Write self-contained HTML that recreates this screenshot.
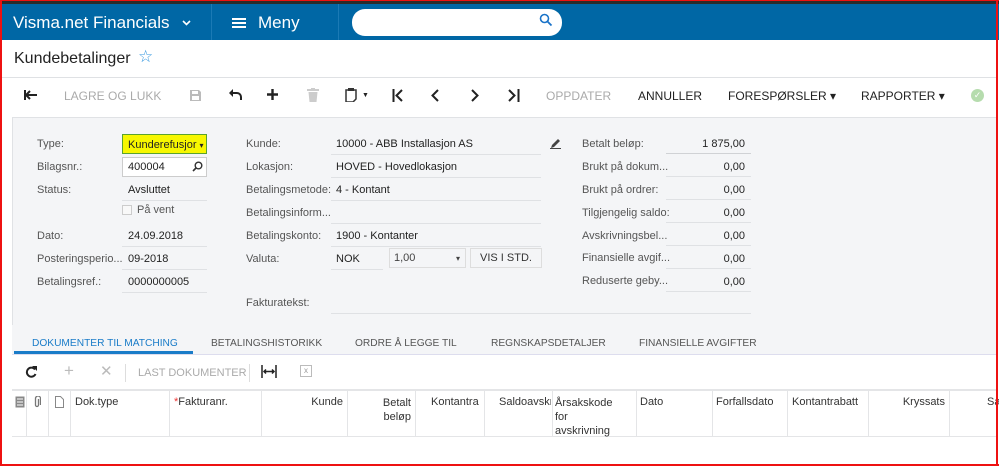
<!DOCTYPE html><html><head><style>
*{box-sizing:border-box;margin:0;padding:0}
body{width:999px;height:466px;position:relative;overflow:hidden;background:#fff;font-family:"Liberation Sans",sans-serif;font-size:11px;color:#222}
.a{position:absolute;white-space:nowrap}
.lbl{color:#555}
.ln{position:absolute;height:1px;background:#dfe1e4}
.g{color:#aaa}
</style></head><body>
<div class="a" style="left:0;top:0;width:999px;height:5px;background:#2b2b2b"></div>
<div class="a" style="left:0;top:4px;width:999px;height:36px;background:#0067a5"></div>
<div class="a" style="left:211px;top:4px;width:1px;height:36px;background:#1b7ab5"></div>
<div class="a" style="left:338px;top:4px;width:1px;height:36px;background:#1b7ab5"></div>
<div class="a" style="left:13px;top:13px;color:#fff;font-size:17px">Visma.net Financials</div>
<svg class="a" style="left:182px;top:20px" width="9" height="6"><path d="M1 1l3.5 3.5L8 1" stroke="#fff" stroke-width="1.6" fill="none"/></svg>
<div class="a" style="left:232px;top:18px;width:14px;height:2px;background:#fff;box-shadow:0 4px 0 #fff,0 8px 0 #fff"></div>
<div class="a" style="left:258px;top:13px;color:#fff;font-size:17px">Meny</div>
<div class="a" style="left:352px;top:9px;width:210px;height:27px;background:#fff;border-radius:13px"></div>
<svg class="a" style="left:539px;top:13px" width="14" height="14"><circle cx="5.5" cy="5.5" r="4" stroke="#1a73c8" stroke-width="1.6" fill="none"/><path d="M8.5 8.5l4 4" stroke="#1a73c8" stroke-width="1.8"/></svg>
<div class="a" style="left:14px;top:50px;font-size:16px;color:#222">Kundebetalinger</div>
<div class="a" style="left:138px;top:47px;font-size:17px;color:#3a9ae0">☆</div>
<div class="ln" style="left:2px;top:77px;width:995px"></div>
<!-- toolbar -->
<svg class="a" style="left:24px;top:89px" width="14" height="12"><path d="M13 6H3M6 2L2 6l4 4M1 1v10" stroke="#222" stroke-width="2" fill="none"/></svg>
<div class="a g" style="left:64px;top:89px;font-size:12px">LAGRE OG LUKK</div>
<svg class="a" style="left:189px;top:89px" width="13" height="13"><path d="M1 1h9l2 2v9H1z" fill="#bbb"/><rect x="3" y="2" width="6" height="3" fill="#fff"/><rect x="3" y="7" width="7" height="4" fill="#fff"/></svg>
<svg class="a" style="left:228px;top:89px" width="15" height="12"><path d="M3 4h6a4 4 0 0 1 4 4v3" stroke="#222" stroke-width="2" fill="none"/><path d="M1 4l4-4v8z" fill="#222"/></svg>
<svg class="a" style="left:266px;top:88px" width="13" height="13"><path d="M6.5 1v11M1 6.5h11" stroke="#222" stroke-width="2.4"/></svg>
<svg class="a" style="left:307px;top:88px" width="12" height="14"><path d="M0 2h12M4 0h4" stroke="#ccc" stroke-width="2"/><path d="M1.5 4h9l-1 10h-7z" fill="#ccc"/></svg>
<svg class="a" style="left:345px;top:88px" width="12" height="14"><path d="M1 2h10v9l-3 3H1z" stroke="#333" stroke-width="1.5" fill="none"/><rect x="3" y="0" width="6" height="3" fill="#333"/></svg>
<div class="a" style="left:362px;top:92px;font-size:7px">▼</div>
<svg class="a" style="left:392px;top:89px" width="12" height="13"><path d="M1.5 0v13M10 1L4.5 6.5 10 12" stroke="#222" stroke-width="2" fill="none"/></svg>
<svg class="a" style="left:430px;top:89px" width="10" height="13"><path d="M8 1L2.5 6.5 8 12" stroke="#222" stroke-width="2" fill="none"/></svg>
<svg class="a" style="left:470px;top:89px" width="10" height="13"><path d="M2 1l5.5 5.5L2 12" stroke="#222" stroke-width="2" fill="none"/></svg>
<svg class="a" style="left:508px;top:89px" width="12" height="13"><path d="M1 1l5.5 5.5L1 12M10.5 0v13" stroke="#222" stroke-width="2" fill="none"/></svg>
<div class="a g" style="left:546px;top:89px;font-size:12px">OPPDATER</div>
<div class="a" style="left:638px;top:89px;font-size:12px">ANNULLER</div>
<div class="a" style="left:728px;top:89px;font-size:12px">FORESPØRSLER ▾</div>
<div class="a" style="left:861px;top:89px;font-size:12px">RAPPORTER ▾</div>
<div class="a" style="left:971px;top:89px;width:13px;height:13px;border-radius:50%;background:#b6dcae;color:#fff;font-size:9px;text-align:center;line-height:13px">✓</div>
<!-- form panel -->
<div class="a" style="left:12px;top:117px;width:985px;height:208px;background:#f4f5f7;border-top:1px solid #e0e2e5;border-left:1px solid #e0e2e5"></div>
<div class="a lbl" style="left:37px;top:138px">Type:</div>
<div class="a" style="left:122px;top:134px;width:85px;height:20px;background:#f7f700;border:1px solid #5aa32e;padding:4px 5px;overflow:hidden">Kunderefusjor <span style="font-size:8px">▾</span></div>
<div class="a lbl" style="left:37px;top:161px">Bilagsnr.:</div>
<div class="a" style="left:122px;top:157px;width:85px;height:20px;background:#fff;border:1px solid #ccc;padding:3px 5px">400004</div>
<svg class="a" style="left:192px;top:161px" width="11" height="11"><circle cx="6.5" cy="4.5" r="3.3" stroke="#333" stroke-width="1.4" fill="none"/><path d="M4 7L1 10" stroke="#333" stroke-width="1.6"/></svg>
<div class="a lbl" style="left:37px;top:184px">Status:</div><div class="a" style="left:128px;top:184px">Avsluttet</div>
<div class="ln" style="left:122px;top:200px;width:85px"></div>
<div class="a" style="left:122px;top:205px;width:10px;height:10px;border:1px solid #ccc;background:#f8f8f8"></div>
<div class="a lbl" style="left:137px;top:204px">På vent</div>
<div class="a lbl" style="left:37px;top:230px">Dato:</div><div class="a" style="left:128px;top:230px">24.09.2018</div>
<div class="ln" style="left:122px;top:246px;width:85px"></div>
<div class="a lbl" style="left:37px;top:253px">Posteringsperio...</div><div class="a" style="left:128px;top:253px">09-2018</div>
<div class="ln" style="left:122px;top:269px;width:85px"></div>
<div class="a lbl" style="left:37px;top:276px">Betalingsref.:</div><div class="a" style="left:128px;top:276px">0000000005</div>
<div class="ln" style="left:122px;top:292px;width:85px"></div>

<div class="a lbl" style="left:246px;top:138px">Kunde:</div><div class="a" style="left:336px;top:138px">10000 - ABB Installasjon AS</div>
<div class="ln" style="left:331px;top:154px;width:210px"></div>
<div class="a lbl" style="left:246px;top:161px">Lokasjon:</div><div class="a" style="left:336px;top:161px">HOVED - Hovedlokasjon</div>
<div class="ln" style="left:331px;top:177px;width:210px"></div>
<div class="a lbl" style="left:246px;top:184px">Betalingsmetode:</div><div class="a" style="left:336px;top:184px">4 - Kontant</div>
<div class="ln" style="left:331px;top:200px;width:210px"></div>
<div class="a lbl" style="left:246px;top:207px">Betalingsinform...</div>
<div class="ln" style="left:331px;top:223px;width:210px"></div>
<div class="a lbl" style="left:246px;top:230px">Betalingskonto:</div><div class="a" style="left:336px;top:230px">1900 - Kontanter</div>
<div class="ln" style="left:331px;top:246px;width:210px"></div>
<div class="a lbl" style="left:246px;top:253px">Valuta:</div><div class="a" style="left:336px;top:253px">NOK</div>
<div class="ln" style="left:331px;top:269px;width:52px"></div>
<div class="a" style="left:389px;top:248px;width:77px;height:20px;border:1px solid #ddd;padding:3px 4px;color:#444">1,00<span style="position:absolute;right:5px;font-size:8px;top:5px">▾</span></div>
<div class="a" style="left:470px;top:248px;width:72px;height:20px;border:1px solid #ddd;text-align:center;padding-top:3px;color:#333">VIS I STD.</div>
<div class="a lbl" style="left:246px;top:297px">Fakturatekst:</div>
<div class="ln" style="left:331px;top:313px;width:420px"></div>
<svg class="a" style="left:550px;top:138px" width="11" height="11"><path d="M1 10l1-3 6-6 2 2-6 6z" fill="#444"/><path d="M0 10.5h11" stroke="#444"/></svg>

<div class="a lbl" style="left:582px;top:138px">Betalt beløp:</div><div class="a" style="left:664px;top:138px;width:81px;text-align:right">1 875,00</div>
<div class="ln" style="left:666px;top:153px;width:85px;background:#d0d2d5"></div>
<div class="a lbl" style="left:582px;top:161px">Brukt på dokum...</div><div class="a" style="left:664px;top:161px;width:81px;text-align:right">0,00</div>
<div class="a lbl" style="left:582px;top:184px">Brukt på ordrer:</div><div class="a" style="left:664px;top:184px;width:81px;text-align:right">0,00</div>
<div class="a lbl" style="left:582px;top:207px">Tilgjengelig saldo:</div><div class="a" style="left:664px;top:207px;width:81px;text-align:right">0,00</div>
<div class="a lbl" style="left:582px;top:230px">Avskrivningsbel...</div><div class="a" style="left:664px;top:230px;width:81px;text-align:right">0,00</div>
<div class="a lbl" style="left:582px;top:252px">Finansielle avgif...</div><div class="a" style="left:664px;top:253px;width:81px;text-align:right">0,00</div>
<div class="a lbl" style="left:582px;top:275px">Reduserte geby...</div><div class="a" style="left:664px;top:276px;width:81px;text-align:right">0,00</div>
<div class="ln" style="left:666px;top:176px;width:85px"></div><div class="ln" style="left:666px;top:199px;width:85px"></div><div class="ln" style="left:666px;top:222px;width:85px"></div><div class="ln" style="left:666px;top:245px;width:85px"></div><div class="ln" style="left:666px;top:268px;width:85px"></div><div class="ln" style="left:666px;top:291px;width:85px"></div>
<!-- tabs -->
<div class="a" style="left:12px;top:325px;width:985px;height:30px;background:#f4f5f7"></div>
<div class="a" style="left:32px;top:338px;color:#1a7cc8;font-size:10.2px">DOKUMENTER TIL MATCHING</div>
<div class="a" style="left:14px;top:351px;width:179px;height:3px;background:#1a7cc8"></div>
<div class="a lbl" style="left:211px;top:338px;font-size:10.2px">BETALINGSHISTORIKK</div>
<div class="a lbl" style="left:355px;top:338px;font-size:10.2px">ORDRE Å LEGGE TIL</div>
<div class="a lbl" style="left:491px;top:338px;font-size:10.2px">REGNSKAPSDETALJER</div>
<div class="a lbl" style="left:639px;top:338px;font-size:10.2px">FINANSIELLE AVGIFTER</div>
<div class="ln" style="left:12px;top:354px;width:985px;background:#dde"></div>
<!-- grid toolbar -->
<svg class="a" style="left:25px;top:366px" width="12" height="12"><path d="M10 3.5A4.5 4.5 0 1 0 10.5 8" stroke="#222" stroke-width="2" fill="none"/><path d="M7 0h5v5z" fill="#222"/></svg>
<div class="a" style="left:64px;top:361px;font-size:17px;color:#bbb">+</div>
<div class="a" style="left:100px;top:362px;font-size:15px;color:#bbb">✕</div>
<div class="a" style="left:125px;top:364px;width:1px;height:18px;background:#ddd"></div>
<div class="a g" style="left:138px;top:367px">LAST DOKUMENTER</div>
<div class="a" style="left:249px;top:364px;width:1px;height:18px;background:#ddd"></div>
<svg class="a" style="left:261px;top:365px" width="16" height="13"><path d="M1 0v13M15 0v13M3 6.5h10M5 4.5l-2 2 2 2M11 4.5l2 2-2 2" stroke="#222" stroke-width="1.5" fill="none"/></svg>
<div class="a" style="left:300px;top:365px;width:12px;height:12px;border:1px solid #bbb;font-size:8px;color:#999;text-align:center;line-height:10px">x</div>
<div class="ln" style="left:12px;top:389px;width:985px;background:#e4e5e7;height:2px"></div>
<div class="ln" style="left:12px;top:436px;width:985px;background:#e4e5e7"></div>
<div class="a" style="left:12px;top:391px;width:985px;height:45px;font-size:11px;color:#333">
<div class="a" style="left:14px;top:0;width:1px;height:45px;background:#e4e5e7"></div>
<div class="a" style="left:36px;top:0;width:1px;height:45px;background:#e4e5e7"></div>
<div class="a" style="left:58px;top:0;width:1px;height:45px;background:#e4e5e7"></div>
<div class="a" style="left:157px;top:0;width:1px;height:45px;background:#e4e5e7"></div>
<div class="a" style="left:249px;top:0;width:1px;height:45px;background:#e4e5e7"></div>
<div class="a" style="left:335px;top:0;width:1px;height:45px;background:#e4e5e7"></div>
<div class="a" style="left:403px;top:0;width:1px;height:45px;background:#e4e5e7"></div>
<div class="a" style="left:472px;top:0;width:1px;height:45px;background:#e4e5e7"></div>
<div class="a" style="left:540px;top:0;width:1px;height:45px;background:#e4e5e7"></div>
<div class="a" style="left:624px;top:0;width:1px;height:45px;background:#e4e5e7"></div>
<div class="a" style="left:700px;top:0;width:1px;height:45px;background:#e4e5e7"></div>
<div class="a" style="left:775px;top:0;width:1px;height:45px;background:#e4e5e7"></div>
<div class="a" style="left:856px;top:0;width:1px;height:45px;background:#e4e5e7"></div>
<div class="a" style="left:937px;top:0;width:1px;height:45px;background:#e4e5e7"></div>
<svg class="a" style="left:3px;top:5px" width="10" height="12"><rect x="0.5" y="0.5" width="9" height="11" fill="#888"/><path d="M2 3h6M2 6h6M2 9h6" stroke="#fff"/></svg>
<svg class="a" style="left:21px;top:5px" width="8" height="12"><path d="M5.5 3v6a1.5 1.5 0 0 1-3 0V2.5a2.5 2.5 0 0 1 5 0V9" stroke="#777" stroke-width="1.3" fill="none"/></svg>
<svg class="a" style="left:43px;top:5px" width="9" height="12"><path d="M0.5 0.5h5l3 3v8h-8z" stroke="#888" fill="#fff"/></svg>
<div class="a" style="left:63px;top:5px">Dok.type</div>
<div class="a" style="left:162px;top:5px"><span style="color:#e33">*</span>Fakturanr.</div>
<div class="a" style="left:250px;top:5px;width:81px;text-align:right">Kunde</div>
<div class="a" style="left:336px;top:5px;width:63px;text-align:right;white-space:normal;line-height:14px">Betalt<br>beløp</div>
<div class="a" style="left:419px;top:5px">Kontantra</div>
<div class="a" style="left:487px;top:5px;width:52px;overflow:hidden">Saldoavskr</div>
<div class="a" style="left:543px;top:5px;line-height:14px">Årsakskode<br>for<br>avskrivning</div>
<div class="a" style="left:628px;top:5px">Dato</div>
<div class="a" style="left:704px;top:5px;width:68px;overflow:hidden">Forfallsdato</div>
<div class="a" style="left:780px;top:5px;width:74px;overflow:hidden">Kontantrabatt</div>
<div class="a" style="left:857px;top:5px;width:76px;text-align:right">Kryssats</div>
<div class="a" style="left:975px;top:5px">Sa</div>
</div>
<!-- red frame -->
<div class="a" style="left:0;top:0;width:2px;height:466px;background:#e11"></div>
<div class="a" style="left:996px;top:0;width:2px;height:466px;background:#e11"></div>
<div class="a" style="left:0;top:464px;width:999px;height:2px;background:#e11"></div>
<div class="a" style="left:0;top:0;width:999px;height:1px;background:#e11"></div>
</body></html>
